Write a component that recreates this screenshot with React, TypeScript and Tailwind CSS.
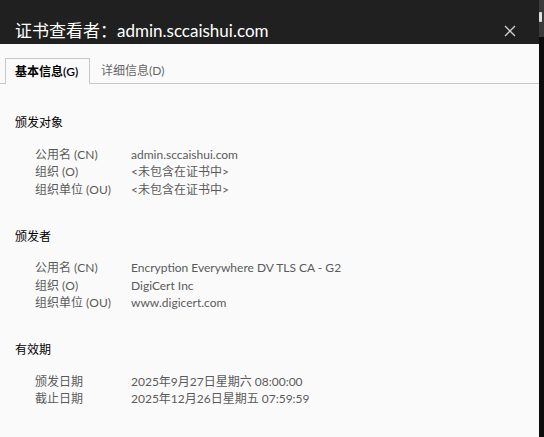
import React from "react";

const font = { fontFamily: 'Lato, "Noto Sans CJK SC", sans-serif' };

function Row({ label, value }: { label: string; value: string }) {
  return (
    <div className="flex shrink-0 h-[17.5px] items-center text-[12px] text-[#5a5a5a]">
      <div className="w-[131px] pl-[35px] shrink-0 whitespace-nowrap">{label}</div>
      <div className="whitespace-nowrap">{value}</div>
    </div>
  );
}

function Section({ title, rows }: { title: string; rows: [string, string][] }) {
  return (
    <div className="flex flex-col shrink-0">
      <div className="h-[18px] shrink-0 flex items-center pl-[15px] text-[12px] text-black">{title}</div>
      <div className="mt-[14px] flex flex-col shrink-0">
        {rows.map(([l, v]) => (
          <Row key={l} label={l} value={v} />
        ))}
      </div>
    </div>
  );
}

export default function App() {
  return (
    <div className="flex w-[544px] h-[437px] overflow-hidden" style={font}>
      <div className="w-[539px] h-full flex flex-col bg-[#fafafa] overflow-hidden">
        <div className="h-[44px] shrink-0 bg-[#202020] flex items-end justify-between pl-[15px] pr-[23px]">
          <div className="text-[17px] text-white leading-[26px] whitespace-nowrap">证书查看者：admin.sccaishui.com</div>
          <svg width="12" height="12" viewBox="0 0 12 12" className="mb-[7px]">
            <path d="M1 1 L11 11 M11 1 L1 11" stroke="#d0d0d0" strokeWidth="1.3" />
          </svg>
        </div>
        <div className="mt-[14px] shrink-0 flex items-end h-[26px] border-b border-[#c8c8c8]">
          <div className="w-[5px]" />
          <div className="relative w-[85px] h-[26px] border border-b-0 border-[#c8c8c8] bg-[#fafafa] -mb-px flex items-center pl-[9px] pt-[1px] text-[12px] font-semibold text-black whitespace-nowrap">
            基本信息(G)
          </div>
          <div className="h-[25px] flex items-center pl-[11px] pt-[1px] text-[12px] text-[#666] whitespace-nowrap">详细信息(D)</div>
        </div>
        <div className="pt-[30px] flex flex-col gap-[29px] shrink-0">
          <Section
            title="颁发对象"
            rows={[
              ["公用名 (CN)", "admin.sccaishui.com"],
              ["组织 (O)", "<未包含在证书中>"],
              ["组织单位 (OU)", "<未包含在证书中>"],
            ]}
          />
          <Section
            title="颁发者"
            rows={[
              ["公用名 (CN)", "Encryption Everywhere DV TLS CA - G2"],
              ["组织 (O)", "DigiCert Inc"],
              ["组织单位 (OU)", "www.digicert.com"],
            ]}
          />
          <Section
            title="有效期"
            rows={[
              ["颁发日期", "2025年9月27日星期六 08:00:00"],
              ["截止日期", "2025年12月26日星期五 07:59:59"],
            ]}
          />
        </div>
      </div>
      <div className="w-[5px] h-full flex flex-col">
        <div className="h-[37px] shrink-0 bg-[#3a3a3a] flex items-start pt-[12px]">
          <div className="w-[3px] h-[10px] bg-[#e0e0e0] rounded-[1px]" />
        </div>
        <div className="flex-1 bg-[#0c0c0c]" />
      </div>
    </div>
  );
}
